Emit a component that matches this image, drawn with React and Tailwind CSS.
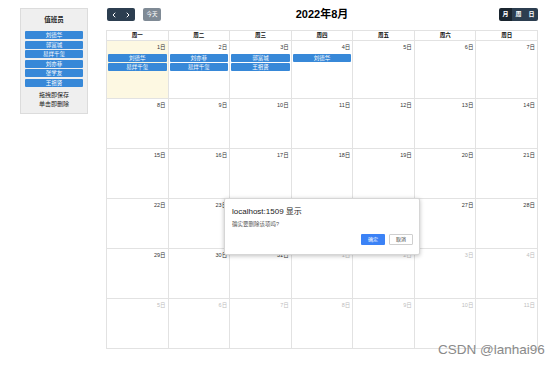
import React from 'react';
import { ChevronLeft, ChevronRight } from 'lucide-react';

const font = { fontFamily: '"Liberation Sans", "Noto Sans CJK SC", sans-serif' };

const staff = ['刘德华', '郭富城', '易烊千玺', '刘亦菲', '张学友', '王祖贤'];
const weekDays = ['周一', '周二', '周三', '周四', '周五', '周六', '周日'];

const events = {
  1: ['刘德华', '易烊千玺'],
  2: ['刘亦菲', '易烊千玺'],
  3: ['郭富城', '王祖贤'],
  4: ['刘德华'],
};

// 6 weeks starting Monday Aug 1 2022
const weeks = [];
for (let w = 0; w < 6; w++) {
  const row = [];
  for (let d = 0; d < 7; d++) {
    const n = w * 7 + d + 1;
    row.push(n <= 31 ? { day: n, cur: true } : { day: n - 31, cur: false });
  }
  weeks.push(row);
}

const Sidebar = () => (
  <div className="w-[68px] h-[106px] mt-[8px] ml-[20px] bg-[#efefef] border border-[#dcdcdc] flex flex-col shrink-0">
    <div className="text-[6.5px] font-bold text-[#222] text-center mt-[7px] leading-[8px]">值班员</div>
    <div className="flex flex-col gap-[1.6px] mt-[7px] px-[4px]">
      {staff.map((s) => (
        <div
          key={s}
          className="h-[8px] bg-[#3788d8] rounded-[1px] text-white text-[5.5px] leading-[8px] text-center"
        >
          {s}
        </div>
      ))}
    </div>
    <div className="text-[6px] text-[#222] text-center leading-[9px] mt-[4px]">
      <div>拖拽即保存</div>
      <div>单击即删除</div>
    </div>
  </div>
);

const Toolbar = () => (
  <div className="grid grid-cols-3 items-center h-[13px]">
    <div className="flex items-center gap-[8px] pl-[1px]">
      <div className="flex h-[13px] w-[28px] bg-[#2c3e50] rounded-[2px] items-center justify-around text-white">
        <ChevronLeft size={8} strokeWidth={3} />
        <ChevronRight size={8} strokeWidth={3} />
      </div>
      <div className="h-[13px] w-[18px] bg-[#7f8a95] rounded-[2px] text-white text-[5.5px] leading-[13px] text-center">
        今天
      </div>
    </div>
    <div className="text-center text-[11px] font-bold text-black leading-[13px]">2022年8月</div>
    <div className="flex justify-end">
      <div className="flex h-[13px] rounded-[2px] overflow-hidden text-white text-[6px] font-bold leading-[13px]">
        <div className="w-[13px] text-center bg-[#1a252f]">月</div>
        <div className="w-[13px] text-center bg-[#2c3e50]">周</div>
        <div className="w-[13px] text-center bg-[#2c3e50]">日</div>
      </div>
    </div>
  </div>
);

const Calendar = () => (
  <div className="w-[432px] border-l border-t border-[#e2e2e2] mt-[9px]">
    <div className="grid grid-cols-7 h-[10px]">
      {weekDays.map((d) => (
        <div
          key={d}
          className="border-r border-b border-[#e2e2e2] text-[5.5px] font-bold text-[#111] text-center leading-[9px]"
        >
          {d}
        </div>
      ))}
    </div>
    {weeks.map((row, wi) => (
      <div key={wi} className={`grid grid-cols-7 ${wi === 0 ? 'h-[58px]' : 'h-[50px]'}`}>
        {row.map((c, ci) => {
          const today = wi === 0 && ci === 0;
          const ev = c.cur ? events[c.day] || [] : [];
          return (
            <div
              key={ci}
              className={`border-r border-b border-[#e2e2e2] flex flex-col ${today ? 'bg-[#fdf8e2]' : ''}`}
            >
              <div
                className={`text-right text-[5.5px] leading-[8px] pr-[2px] pt-[2px] ${
                  c.cur ? 'text-[#333]' : 'text-[#bdbdbd]'
                }`}
              >
                {c.day}日
              </div>
              <div className="flex flex-col gap-[1px] mt-[2.5px] px-[1px]">
                {ev.map((e, i) => (
                  <div
                    key={i}
                    className="h-[8px] bg-[#3788d8] rounded-[1px] text-white text-[5.5px] leading-[8px] text-center"
                  >
                    {e}
                  </div>
                ))}
              </div>
            </div>
          );
        })}
      </div>
    ))}
  </div>
);

const ConfirmDialog = () => (
  <div className="absolute left-[224px] top-[198px] w-[196px] h-[57px] bg-white border border-[#d6d6d6] rounded-[2px] shadow-[0_1px_4px_rgba(0,0,0,0.25)]">
    <div className="text-[8px] text-[#222] leading-[10px] mt-[8px] ml-[7px]">localhost:1509 显示</div>
    <div className="text-[5.5px] text-[#555] leading-[8px] mt-[3px] ml-[7px]">确实要删除该项吗?</div>
    <div className="flex justify-end gap-[4px] mt-[6px] mr-[6px]">
      <div className="w-[24px] h-[11px] bg-[#3b82f6] rounded-[1px] text-white text-[5px] leading-[11px] text-center">
        确定
      </div>
      <div className="w-[24px] h-[11px] bg-white border border-[#cfcfcf] rounded-[1px] text-[#333] text-[5px] leading-[9px] text-center">
        取消
      </div>
    </div>
  </div>
);

export default function App() {
  return (
    <div className="relative w-[558px] h-[365px] bg-white overflow-hidden" style={font}>
      <div className="flex">
        <Sidebar />
        <div className="ml-[18px] mt-[8px]">
          <Toolbar />
          <Calendar />
        </div>
      </div>
      <ConfirmDialog />
      <div className="absolute left-[438px] top-[341px] text-[13.5px] text-[#8a8a8a] leading-[17px]">CSDN @lanhai96</div>
    </div>
  );
}
